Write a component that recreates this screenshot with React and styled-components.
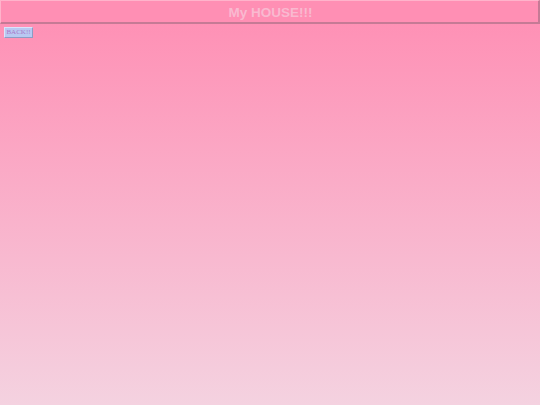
import styled, { createGlobalStyle } from "styled-components";

const GlobalStyle = createGlobalStyle`
  html, body {
    margin: 0;
    padding: 0;
    height: 100%;
  }
  body {
    background: linear-gradient(to bottom, #ff8db3 0%, #f4d2e0 100%);
    background-attachment: fixed;
    font-family: "Liberation Serif", serif;
  }
  #root {
    min-height: 100vh;
  }
`;

const App = () => {
  return (
    <>
      <GlobalStyle />
      <Page>
        <Header>
          <Title>My HOUSE!!!</Title>
        </Header>
        <BackButton type="button">BACK!!</BackButton>
      </Page>
    </>
  );
};

export default App;

const Page = styled.div`
  display: flex;
  flex-direction: column;
  align-items: flex-start;
  min-height: 100vh;
`;

const Header = styled.div`
  box-sizing: border-box;
  width: 540px;
  height: 24px;
  padding-top: 1px;
  display: flex;
  align-items: center;
  justify-content: center;
  background: #ff8fb4;
  border-top: 1px solid #ffb3cb;
  border-left: 1px solid #ffb3cb;
  border-bottom: 2px solid #c57a95;
  border-right: 2px solid #c57a95;
`;

const Title = styled.h1`
  margin: 0 0 0 2px;
  font-family: "Liberation Sans", Arial, sans-serif;
  font-size: 13.5px;
  font-weight: bold;
  color: #f9b9d0;
`;

const BackButton = styled.button`
  box-sizing: border-box;
  margin: 3px 0 0 4px;
  padding: 0 1px;
  height: 11px;
  width: 29px;
  display: flex;
  align-items: center;
  justify-content: center;
  background: #b9c9f2;
  border-top: 1px solid #dbe4fb;
  border-left: 1px solid #dbe4fb;
  border-bottom: 1px solid #8d9cc4;
  border-right: 1px solid #8d9cc4;
  font-family: "Liberation Serif", "Times New Roman", serif;
  font-size: 7px;
  color: #a878c8;
  line-height: 1;
  white-space: nowrap;
`;
